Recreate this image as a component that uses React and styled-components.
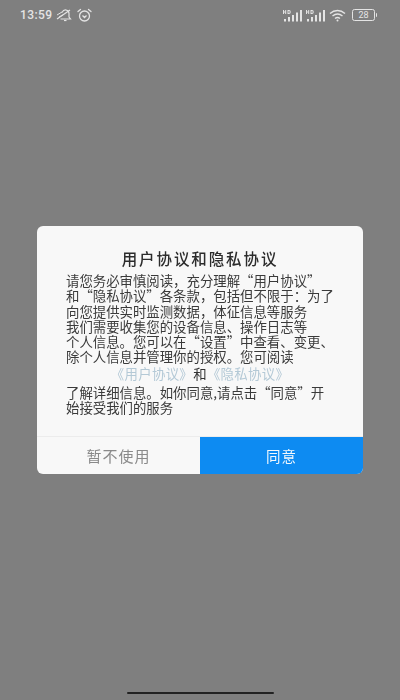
import React from 'react';
import styled, { createGlobalStyle } from 'styled-components';

const GlobalStyle = createGlobalStyle`
  html, body {
    margin: 0;
    padding: 0;
    background: #7f7f7f;
  }
  body {
    font-family: "Noto Sans CJK SC", "Liberation Sans", sans-serif;
  }
`;

const Screen = styled.div`
  width: 400px;
  height: 700px;
  display: flex;
  flex-direction: column;
  justify-content: space-between;
  background: #7f7f7f;
  overflow: hidden;
`;

const StatusBar = styled.div`
  height: 30px;
  padding: 0 23px 0 20px;
  display: flex;
  align-items: center;
  justify-content: space-between;
  color: #e4e4e4;
`;

const StatusGroup = styled.div`
  display: flex;
  align-items: center;
  gap: ${(p) => p.$gap || 4}px;
`;

const Clock = styled.span`
  font-family: "Roboto", "Liberation Sans", sans-serif;
  font-size: 12px;
  font-weight: 500;
  letter-spacing: 0.4px;
`;

const HomeBar = styled.div`
  align-self: center;
  width: 147px;
  height: 2px;
  margin-bottom: 6px;
  background: #222;
  border-radius: 1px;
`;

const Backdrop = styled.div`
  position: fixed;
  inset: 0;
  width: 400px;
  height: 700px;
  display: flex;
  align-items: center;
  justify-content: center;
`;

const Dialog = styled.div`
  width: 326px;
  height: 248px;
  display: flex;
  flex-direction: column;
  background: #f8f8f8;
  border-radius: 6px;
  overflow: hidden;
`;

const Title = styled.h2`
  margin: 0;
  padding-top: 23px;
  text-align: center;
  font-size: 15.5px;
  line-height: 18px;
  font-weight: 500;
  letter-spacing: 1.9px;
  color: #2c2c2c;
`;

const Body = styled.div`
  flex: 1;
  padding: 6px 0 0 29px;
  font-size: 13.4px;
  line-height: 15.3px;
  color: #3a3a3a;
`;

const Line = styled.div`
  white-space: nowrap;
`;

const LinkRow = styled.div`
  margin: 1px 0 4px;
  padding-right: 29px;
  text-align: center;
  white-space: nowrap;
  letter-spacing: 0.35px;
  color: #333;
`;

const Link = styled.span`
  color: #b4c9d6;
`;

const Footer = styled.div`
  height: 37px;
  display: flex;
  border-top: 1px solid #ececec;
`;

const FooterButton = styled.button`
  flex: 1;
  border: 0;
  padding: 0;
  font-family: inherit;
  font-size: ${(p) => (p.$primary ? 14.5 : 15)}px;
  letter-spacing: 1px;
  background: ${(p) => (p.$primary ? '#0d8bf2' : 'transparent')};
  color: ${(p) => (p.$primary ? '#f2f8fd' : '#8a8a8a')};
`;

const MuteIcon = () => (
  <svg width="17" height="14" viewBox="0 0 17 14" fill="none" stroke="#e4e4e4" strokeWidth="1.2">
    <path d="M6 4.500C7 2.500 8.500 1.800 10 2c2 .3 3 1.800 3 3.500V9l1.500 2H4.500" />
    <path d="M1 11 14 2" />
    <path d="M1 7l5-3M3 9l4-2" strokeWidth="1" />
    <path d="M8 12.500h2.500" />
  </svg>
);

const AlarmIcon = () => (
  <svg width="15" height="15" viewBox="0 0 15 15" fill="none" stroke="#e4e4e4" strokeWidth="1.300">
    <circle cx="7.500" cy="8" r="5" />
    <path d="M1 3.500 3.500 1.500M14 3.500 11.500 1.500" strokeLinecap="round" />
    <path d="M5.500 7.500 7.500 9.500 9.500 7.500" />
  </svg>
);

const SignalIcon = () => (
  <svg width="21" height="13" viewBox="0 0 21 13" fill="#e4e4e4">
    <rect x="1" y="10" width="2" height="2.500" />
    <rect x="5" y="8" width="2" height="4.500" />
    <rect x="9" y="6" width="2" height="6.500" />
    <rect x="13" y="3.500" width="2" height="9" />
    <rect x="17" y="1" width="2" height="11.500" />
    <path d="M0 1h1v1.500h1.200V1h1v4h-1V3.500H1V5H0zM4.500 1H6c1.200 0 1.700.8 1.700 2S7.200 5 6 5H4.500zm1 1v2H6c.5 0 .7-.4.700-1S6.500 2 6 2z" />
  </svg>
);

const WifiIcon = () => (
  <svg width="17" height="13" viewBox="0 0 17 13" fill="none" stroke="#e4e4e4" strokeWidth="1.400">
    <path d="M1 4.500C5.500.5 11.500.5 16 4.500" />
    <path d="M3.500 7C6.500 4.500 10.500 4.500 13.500 7" />
    <path d="M6 9.500C7.500 8.300 9.500 8.300 11 9.500" />
    <circle cx="8.500" cy="11.500" r="1" fill="#e4e4e4" stroke="none" />
  </svg>
);

const Battery = styled.div`
  position: relative;
  width: 21px;
  height: 10px;
  border: 1px solid #e4e4e4;
  border-radius: 2.5px;
  margin-left: 4px;
  margin-right: 2px;
  font-family: "Roboto", "Liberation Sans", sans-serif;
  font-size: 9px;
  line-height: 10px;
  text-align: center;
  color: #e4e4e4;

  &::after {
    content: '';
    position: absolute;
    right: -3px;
    top: 3px;
    width: 1.5px;
    height: 4px;
    background: #e4e4e4;
    border-radius: 0 1px 1px 0;
  }
`;

export default function App() {
  return (
    <>
      <GlobalStyle />
      <Screen>
        <StatusBar>
          <StatusGroup $gap={4}>
            <Clock>13:59</Clock>
            <MuteIcon />
            <AlarmIcon />
          </StatusGroup>
          <StatusGroup $gap={2}>
            <SignalIcon />
            <SignalIcon />
            <WifiIcon />
            <Battery>28</Battery>
          </StatusGroup>
        </StatusBar>
        <HomeBar />
      </Screen>
      <Backdrop>
        <Dialog>
          <Title>用户协议和隐私协议</Title>
          <Body>
            <Line>请您务必审慎阅读，充分理解“用户协议”</Line>
            <Line>和“隐私协议”各条款，包括但不限于：为了</Line>
            <Line>向您提供实时监测数据，体征信息等服务</Line>
            <Line>我们需要收集您的设备信息、操作日志等</Line>
            <Line>个人信息。您可以在“设置”中查看、变更、</Line>
            <Line>除个人信息并管理你的授权。您可阅读</Line>
            <LinkRow>
              <Link>《用户协议》</Link>和<Link>《隐私协议》</Link>
            </LinkRow>
            <Line>了解详细信息。如你同意,请点击“同意”开</Line>
            <Line>始接受我们的服务</Line>
          </Body>
          <Footer>
            <FooterButton>暂不使用</FooterButton>
            <FooterButton $primary>同意</FooterButton>
          </Footer>
        </Dialog>
      </Backdrop>
    </>
  );
}
